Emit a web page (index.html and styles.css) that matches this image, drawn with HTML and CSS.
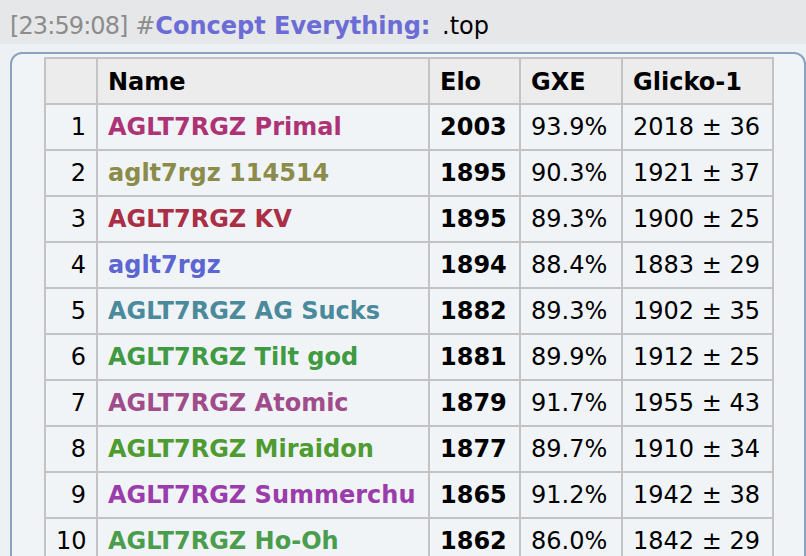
FILE: index.html
```html
<!DOCTYPE html>
<html>
<head>
<meta charset="utf-8">
<link rel="stylesheet" href="styles.css">
</head>
<body>
<div class="chat">
  <div class="msg-head"><span class="time">[23:59:08]</span> <span class="hash">#</span><strong class="user">Concept Everything:</strong> <span class="cmd">.top</span></div>
  <div class="box">
    <table class="ladder">
      <colgroup>
        <col class="c-rank"><col class="c-name"><col class="c-elo"><col class="c-gxe"><col class="c-glicko">
      </colgroup>
      <thead>
        <tr><th></th><th>Name</th><th>Elo</th><th>GXE</th><th>Glicko-1</th></tr>
      </thead>
      <tbody>
        <tr><td class="rank">1</td><td class="name n1">AGLT7RGZ Primal</td><td class="elo">2003</td><td>93.9%</td><td>2018 ± 36</td></tr>
        <tr><td class="rank">2</td><td class="name n2">aglt7rgz 114514</td><td class="elo">1895</td><td>90.3%</td><td>1921 ± 37</td></tr>
        <tr><td class="rank">3</td><td class="name n3">AGLT7RGZ KV</td><td class="elo">1895</td><td>89.3%</td><td>1900 ± 25</td></tr>
        <tr><td class="rank">4</td><td class="name n4">aglt7rgz</td><td class="elo">1894</td><td>88.4%</td><td>1883 ± 29</td></tr>
        <tr><td class="rank">5</td><td class="name n5">AGLT7RGZ AG Sucks</td><td class="elo">1882</td><td>89.3%</td><td>1902 ± 35</td></tr>
        <tr><td class="rank">6</td><td class="name n6">AGLT7RGZ Tilt god</td><td class="elo">1881</td><td>89.9%</td><td>1912 ± 25</td></tr>
        <tr><td class="rank">7</td><td class="name n7">AGLT7RGZ Atomic</td><td class="elo">1879</td><td>91.7%</td><td>1955 ± 43</td></tr>
        <tr><td class="rank">8</td><td class="name n8">AGLT7RGZ Miraidon</td><td class="elo">1877</td><td>89.7%</td><td>1910 ± 34</td></tr>
        <tr><td class="rank">9</td><td class="name n9">AGLT7RGZ Summerchu</td><td class="elo">1865</td><td>91.2%</td><td>1942 ± 38</td></tr>
        <tr><td class="rank">10</td><td class="name n10">AGLT7RGZ Ho-Oh</td><td class="elo">1862</td><td>86.0%</td><td>1842 ± 29</td></tr>
      </tbody>
    </table>
  </div>
</div>
</body>
</html>
```
FILE: styles.css
```css
html, body {
  margin: 0;
  padding: 0;
  background: #eef1f4;
  overflow: hidden;
}
body {
  font-family: "DejaVu Sans", Verdana, sans-serif;
  font-size: 24px;
  color: #000;
}
.chat {
  width: 806px;
  height: 556px;
  overflow: hidden;
}
.msg-head {
  height: 36px;
  line-height: 36px;
  padding-top: 8px;
  background: #e5e7e9;
  padding-left: 10px;
  white-space: nowrap;
}
.time {
  color: #8c8c8c;
  letter-spacing: -0.9px;
}
.hash {
  color: #8c8c8c;
}
.user {
  color: #6c6cd6;
  font-weight: bold;
}
.cmd {
  margin-left: 4px;
}
.box {
  margin: 8px 0 0 10px;
  border: 2px solid #8aa2c0;
  border-radius: 12px;
  background: #f1f4f7;
  padding: 3px 0 0 32px;
  height: 520px;
}
.ladder {
  border-collapse: collapse;
  table-layout: fixed;
  width: 730px;
}
.c-rank { width: 52px; }
.c-name { width: 332px; }
.c-elo { width: 91px; }
.c-gxe { width: 102px; }
.c-glicko { width: 151px; }
.ladder th, .ladder td {
  border: 2px solid #c3c3c3;
  padding: 5px 10px;
  line-height: 34px;
  text-align: left;
  white-space: nowrap;
}
.ladder th {
  background: #ececec;
  font-weight: bold;
  padding: 6px 10px 4px;
}
.ladder td.rank {
  text-align: right;
}
.name, .elo {
  font-weight: bold;
}
.n1 { color: #ae3374; }
.n2 { color: #8b8b4a; }
.n3 { color: #aa2f46; }
.n4 { color: #5b66d2; }
.n5 { color: #4a8a9b; }
.n6 { color: #3f9a43; }
.n7 { color: #a04c8a; }
.n8 { color: #4e9b31; }
.n9 { color: #9a3caa; }
.n10 { color: #4a9d4c; }
```
